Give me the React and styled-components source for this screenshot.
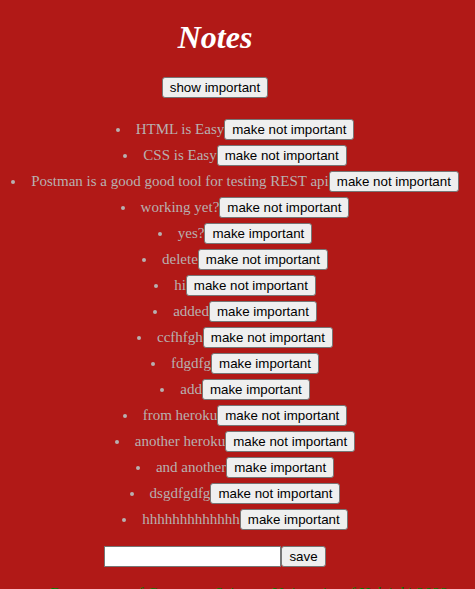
import React, { useState } from "react";
import styled, { createGlobalStyle } from "styled-components";

const GlobalStyle = createGlobalStyle`
  html { background: #b11917; }
  body {
    margin: 0;
    overflow: hidden;
    font-family: "Liberation Serif", "Times New Roman", serif;
    font-size: 16px;
  }
`;

const Page = styled.main`
  display: flex;
  flex-direction: column;
  align-items: center;
  margin-right: 45px;
  white-space: nowrap;
`;

const Title = styled.h1`
  margin: 19px 0 21px;
  font-size: 32px;
  line-height: 37px;
  font-style: italic;
  color: #fff;
`;

const Button = styled.button`
  box-sizing: border-box;
  height: 21px;
  margin: 0;
  padding: 0 7px;
  border: 1px solid #767676;
  border-radius: 3px;
  background: #efefef;
  color: #000;
  font: 13.333px "Liberation Sans", Arial, sans-serif;
`;

const NoteList = styled.ul`
  margin: 16px 0;
  padding: 0 0 0 40px;
  list-style-position: inside;
  text-align: center;
  color: #b8b0b0;
  font-size: 15px;
`;

const NoteItem = styled.li`
  padding-top: 5px;
  line-height: 21px;
`;

const NoteForm = styled.form`
  display: flex;
`;

const NoteInput = styled.input`
  box-sizing: border-box;
  width: 177px;
  height: 21px;
  padding: 1px 2px;
  border: 1px solid #767676;
  border-radius: 0;
  background: #fff;
  font: 13.333px "Liberation Sans", Arial, sans-serif;
`;

const Footer = styled.footer`
  margin-top: 18px;
  color: green;
  font-style: italic;
  font-size: 16px;
`;

const initialNotes = [
  ["HTML is Easy", true],
  ["CSS is Easy", true],
  ["Postman is a good good tool for testing REST api", true],
  ["working yet?", true],
  ["yes?", false],
  ["delete", true],
  ["hi", true],
  ["added", false],
  ["ccfhfgh", true],
  ["fdgdfg", false],
  ["add", false],
  ["from heroku", true],
  ["another heroku", true],
  ["and another", false],
  ["dsgdfgdfg", true],
  ["hhhhhhhhhhhhh", false],
].map(([content, important], id) => ({ id, content, important }));

export default function App() {
  const [notes, setNotes] = useState(initialNotes);
  const [showAll, setShowAll] = useState(true);
  const [draft, setDraft] = useState("");

  const toggle = (id) =>
    setNotes(notes.map((n) => (n.id === id ? { ...n, important: !n.important } : n)));

  const save = (event) => {
    event.preventDefault();
    setNotes([...notes, { id: notes.length, content: draft, important: false }]);
    setDraft("");
  };

  return (
    <>
      <GlobalStyle />
      <Page>
        <Title>Notes</Title>
        <Button type="button" onClick={() => setShowAll(!showAll)}>
          show {showAll ? "important" : "all"}
        </Button>
        <NoteList>
          {notes
            .filter((n) => showAll || n.important)
            .map((n) => (
              <NoteItem key={n.id}>
                {n.content}
                <Button type="button" onClick={() => toggle(n.id)}>
                  {n.important ? "make not important" : "make important"}
                </Button>
              </NoteItem>
            ))}
        </NoteList>
        <NoteForm onSubmit={save}>
          <NoteInput aria-label="New note" value={draft} onChange={(e) => setDraft(e.target.value)} />
          <Button type="submit">save</Button>
        </NoteForm>
        <Footer>Note app, Department of Computer Science, University of Helsinki 2022</Footer>
      </Page>
    </>
  );
}
